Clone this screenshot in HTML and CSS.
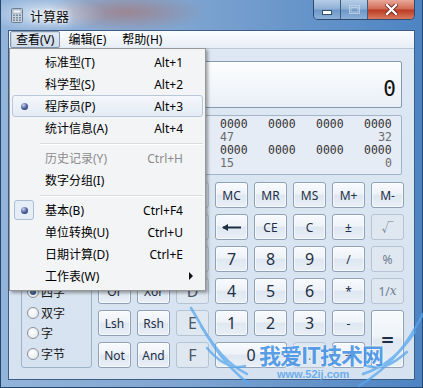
FILE: index.html
```html
<!DOCTYPE html>
<html lang="zh-CN">
<head>
	<meta charset="UTF-8">
	<title>计算器</title>
	<link rel="stylesheet" href="styles.css">
</head>
<body>

<div class="window">
	<div class="titlebar">
		<svg class="app-icon" width="12" height="15" viewBox="0 0 12 15">
			<rect x="0.5" y="0.5" width="11" height="14" rx="1" fill="#c9d3de" stroke="#6f7f92"/>
			<rect x="2" y="2" width="8" height="3" fill="#f4f8fc" stroke="#8796a8" stroke-width="0.6"/>
			<g fill="#7b8a9c">
				<rect x="2" y="6.5" width="2" height="1.5"/><rect x="5" y="6.5" width="2" height="1.5"/><rect x="8" y="6.5" width="2" height="1.5"/>
				<rect x="2" y="9" width="2" height="1.5"/><rect x="5" y="9" width="2" height="1.5"/><rect x="8" y="9" width="2" height="1.5"/>
				<rect x="2" y="11.5" width="2" height="1.5"/><rect x="5" y="11.5" width="2" height="1.5"/><rect x="8" y="11.5" width="2" height="1.5"/>
			</g>
		</svg>
		<span class="title">计算器</span>
		<div class="caption">
			<div class="cap-btn cap-min">
				<svg width="10" height="5" viewBox="0 0 10 5"><rect x="0.5" y="0.5" width="9" height="4" fill="#fff" stroke="#34506f"/></svg>
			</div>
			<div class="cap-btn cap-max">
				<svg width="11" height="9" viewBox="0 0 11 9"><rect x="0.5" y="0.5" width="10" height="8" fill="none" stroke="#c5d6ea"/><rect x="2" y="2.5" width="7" height="4.5" fill="none" stroke="#c5d6ea"/></svg>
			</div>
			<div class="cap-btn cap-close">
				<svg width="13" height="11" viewBox="0 0 13 11"><path d="M2 1 L11 10 M11 1 L2 10" stroke="#6b1a10" stroke-width="4" stroke-linecap="square"/><path d="M2 1 L11 10 M11 1 L2 10" stroke="#fff" stroke-width="2.4" stroke-linecap="square"/></svg>
			</div>
		</div>
	</div>

	<div class="client">
		<div class="menubar">
			<span class="menubar-item open">查看(V)</span>
			<span class="menubar-item">编辑(E)</span>
			<span class="menubar-item">帮助(H)</span>
		</div>

		<div class="calc">
			<div class="display"><span class="value">0</span></div>

			<div class="bits">
				<div class="bit-row"><span>0000</span><span>0000</span><span>0000</span><span>0000</span><span>0000</span><span>0000</span><span>0000</span><span>0000</span></div>
				<div class="bit-labels"><span class="lab-first">63</span><span class="lab-mid">47</span><span class="lab-last">32</span></div>
				<div class="bit-row"><span>0000</span><span>0000</span><span>0000</span><span>0000</span><span>0000</span><span>0000</span><span>0000</span><span>0000</span></div>
				<div class="bit-labels"><span class="lab-first">31</span><span class="lab-mid">15</span><span class="lab-last">0</span></div>
			</div>

			<div class="keypad">
				<div class="group group-radix">
					<label class="radio"><i></i>十六进制</label>
					<label class="radio checked"><i></i>十进制</label>
					<label class="radio"><i></i>八进制</label>
					<label class="radio"><i></i>二进制</label>
				</div>
				<div class="group group-word">
					<label class="radio checked"><i></i>四字</label>
					<label class="radio"><i></i>双字</label>
					<label class="radio"><i></i>字</label>
					<label class="radio"><i></i>字节</label>
				</div>

				<button class="key">Quot</button>
				<button class="key">Mod</button>
				<button class="key off hex">A</button>
				<button class="key">MC</button>
				<button class="key">MR</button>
				<button class="key">MS</button>
				<button class="key">M+</button>
				<button class="key">M-</button>

				<button class="key">(</button>
				<button class="key">)</button>
				<button class="key off hex">B</button>
				<button class="key">
					<svg width="20" height="7" viewBox="0 0 20 7"><path d="M1 3.5 H19" stroke="#1e2f45" stroke-width="2"/><path d="M0 3.5 L6 0 V7 Z" fill="#1e2f45"/></svg>
				</button>
				<button class="key">CE</button>
				<button class="key">C</button>
				<button class="key">±</button>
				<button class="key off">√</button>

				<button class="key">RoL</button>
				<button class="key">RoR</button>
				<button class="key off hex">C</button>
				<button class="key digit">7</button>
				<button class="key digit">8</button>
				<button class="key digit">9</button>
				<button class="key">/</button>
				<button class="key off">%</button>

				<button class="key">Or</button>
				<button class="key">Xor</button>
				<button class="key off hex">D</button>
				<button class="key digit">4</button>
				<button class="key digit">5</button>
				<button class="key digit">6</button>
				<button class="key">*</button>
				<button class="key off">1/<em>x</em></button>

				<button class="key">Lsh</button>
				<button class="key">Rsh</button>
				<button class="key off hex">E</button>
				<button class="key digit">1</button>
				<button class="key digit">2</button>
				<button class="key digit">3</button>
				<button class="key">-</button>
				<button class="key equals">=</button>

				<button class="key">Not</button>
				<button class="key">And</button>
				<button class="key off hex">F</button>
				<button class="key digit zero">0</button>
				<button class="key off">.</button>
				<button class="key">+</button>
			</div>
		</div>
	</div>

	<div class="menu">
		<div class="menu-item"><span class="mi-label">标准型(T)</span><span class="mi-key">Alt+1</span></div>
		<div class="menu-item"><span class="mi-label">科学型(S)</span><span class="mi-key">Alt+2</span></div>
		<div class="menu-item hover"><span class="mi-check"><b class="dot"></b></span><span class="mi-label">程序员(P)</span><span class="mi-key">Alt+3</span></div>
		<div class="menu-item"><span class="mi-label">统计信息(A)</span><span class="mi-key">Alt+4</span></div>
		<div class="menu-sep"></div>
		<div class="menu-item disabled"><span class="mi-label">历史记录(Y)</span><span class="mi-key">Ctrl+H</span></div>
		<div class="menu-item"><span class="mi-label">数字分组(I)</span></div>
		<div class="menu-sep"></div>
		<div class="menu-item"><span class="mi-check boxed"><b class="dot"></b></span><span class="mi-label">基本(B)</span><span class="mi-key">Ctrl+F4</span></div>
		<div class="menu-item"><span class="mi-label">单位转换(U)</span><span class="mi-key">Ctrl+U</span></div>
		<div class="menu-item"><span class="mi-label">日期计算(D)</span><span class="mi-key">Ctrl+E</span></div>
		<div class="menu-item"><span class="mi-label">工作表(W)</span><span class="mi-arrow"></span></div>
	</div>

	<div class="watermark">
		<svg class="wings" width="240" height="90" viewBox="0 0 240 90">
			<g fill="none" stroke="#56a6ee" stroke-width="2.5" stroke-linecap="round" opacity="0.75">
				<path d="M4 4 C20 30 30 55 62 80"/>
				<path d="M14 22 C28 44 40 60 60 70"/>
				<path d="M20 44 C32 58 44 66 58 62"/>
				<path d="M236 10 C222 36 208 60 172 82"/>
				<path d="M228 28 C214 48 200 62 176 70"/>
				<path d="M220 48 C206 60 196 66 180 62"/>
			</g>
		</svg>
		<span class="wm-title">我爱IT技术网</span>
		<span class="wm-url">www.52ij.com</span>
	</div>
</div>

</body>
</html>
```

FILE: styles.css
```css
* {
	box-sizing: border-box;
}

body {
	margin: 0;
	width: 423px;
	height: 388px;
	overflow: hidden;
	font-family: "Noto Sans", "Noto Sans CJK SC", sans-serif;
	font-size: 12px;
	color: #1e2f45;
}

.window {
	position: relative;
	width: 423px;
	height: 388px;
	display: flex;
	flex-direction: column;
	padding: 0 7px 7px 7px;
	border-left: 1px solid #23466e;
	border-right: 1px solid #23466e;
	border-bottom: 1px solid #23466e;
	background:
		radial-gradient(ellipse 80px 20px at 125px 12px, rgba(176, 104, 92, .55), rgba(176, 104, 92, 0)),
		radial-gradient(ellipse 60px 18px at 45px 14px, rgba(230, 238, 248, .85), rgba(230, 238, 248, 0)),
		linear-gradient(90deg, #93b4da 0, #7ea4d0 45%, #4d84c3 100%);
}

/* title bar */

.titlebar {
	height: 30px;
	display: flex;
	align-items: center;
	padding-left: 3px;
}

.app-icon {
	flex: none;
	margin-top: 1px;
}

.title {
	margin-left: 7px;
	font-size: 13px;
	color: #111;
	text-shadow: 0 0 6px #fff, 0 0 3px #fff;
}

.caption {
	align-self: flex-start;
	margin-left: auto;
	margin-right: 0;
	display: flex;
	height: 20px;
	border: 1px solid #2f4b6c;
	border-top: none;
	border-radius: 0 0 5px 5px;
	overflow: hidden;
}

.cap-btn {
	display: flex;
	align-items: center;
	justify-content: center;
	height: 100%;
}

.cap-min,
.cap-max {
	width: 27px;
	border-right: 1px solid #3d5c80;
	background: linear-gradient(#b7cde6, #8eafd5 48%, #6e96c6 52%, #8bb0da);
}

.cap-min svg {
	margin-top: 5px;
}

.cap-max svg {
	opacity: .8;
}

.cap-close {
	width: 46px;
	background: linear-gradient(#e9a898, #d06a55 48%, #bc3a22 52%, #d77a5f);
}

/* client area */

.client {
	flex: 1;
	display: flex;
	flex-direction: column;
	border: 1px solid #3b5d86;
	background: #d9e4f1;
}

.menubar {
	height: 18px;
	display: flex;
	align-items: stretch;
	padding-left: 1px;
	background: linear-gradient(#fbfcfe, #e8eef6);
	border-bottom: 1px solid #b9c7d7;
}

.menubar-item {
	display: flex;
	align-items: center;
	padding: 0 5px 0 5px;
	margin-right: 1px;
	line-height: 16px;
	border: 1px solid transparent;
	white-space: nowrap;
	color: #000;
}

.menubar-item + .menubar-item {
	margin-left: 1px;
}

.menubar-item:last-child {
	margin-left: 3px;
}

.menubar-item.open {
	border-color: #8396ad;
	border-radius: 2px;
	background: linear-gradient(#e3ebf5, #cfdceb);
	box-shadow: inset 1px 1px 0 rgba(0, 0, 0, .08);
}

.calc {
	flex: 1;
	padding: 12px 12px 0 12px;
	background: linear-gradient(#dde8f4, #d6e2ef);
}

.display {
	height: 47px;
	border: 1px solid #8599b2;
	border-radius: 2px;
	background: linear-gradient(#fdfeff, #e9eff7);
	display: flex;
	justify-content: flex-end;
	padding: 16px 5px 0 0;
}

.display .value {
	font-family: "DejaVu Sans Mono", monospace;
	font-size: 21px;
	line-height: 22px;
	color: #111;
}

.bits {
	margin-top: 7px;
	height: 60px;
	border: 1px solid #a3b4c8;
	border-radius: 2px;
	background: #e5ecf5;
	padding: 2px 0 0 6px;
	font-family: "DejaVu Sans Mono", monospace;
	font-size: 11.5px;
	line-height: 13px;
}

.bit-row,
.bit-labels {
	display: grid;
	grid-template-columns: repeat(8, 28px);
	column-gap: 20px;
	height: 13px;
}

.bit-row {
	color: #333;
}

.bit-labels {
	color: #6b6b6b;
}

.lab-first {
	grid-column: 1;
}

.lab-mid {
	grid-column: 5;
}

.lab-last {
	grid-column: 8;
	justify-self: end;
}

/* keys */

.keypad {
	margin-top: 7px;
	display: grid;
	grid-template-columns: 71px repeat(8, 33px);
	grid-template-rows: repeat(6, 26px);
	gap: 6px;
}

.group {
	grid-column: 1;
	border: 1px solid #9fb1c6;
	border-radius: 3px;
	display: flex;
	flex-direction: column;
	justify-content: space-around;
	padding: 2px 0 2px 5px;
}

.group-radix {
	grid-row: 1 / 4;
}

.group-word {
	grid-row: 4 / 7;
	justify-content: flex-start;
	padding-top: 3px;
}

.group-word .radio {
	height: 20.5px;
}

.radio {
	display: flex;
	align-items: center;
	gap: 2px;
	font-size: 12px;
	color: #1a1a1a;
	white-space: nowrap;
}

.radio i {
	width: 12px;
	height: 12px;
	border-radius: 50%;
	border: 1px solid #8a9099;
	background: radial-gradient(circle at 40% 35%, #fff, #dfe3e8);
	position: relative;
	flex: none;
}

.radio.checked i::after {
	content: "";
	position: absolute;
	left: 2px;
	top: 2px;
	width: 6px;
	height: 6px;
	border-radius: 50%;
	background: radial-gradient(circle at 40% 35%, #6d8fc0, #1b3566);
}

.key {
	margin: 0;
	padding: 0;
	border: 1px solid #8ea1b8;
	border-radius: 3px;
	background: linear-gradient(#f8fafd 0%, #eef3f8 45%, #dfe7f1 52%, #e9eff6 100%);
	box-shadow: inset 0 0 0 1px rgba(255, 255, 255, .6);
	font-family: "Noto Sans", "Noto Sans CJK SC", sans-serif;
	font-size: 12px;
	color: #1e2f45;
	display: flex;
	align-items: center;
	justify-content: center;
}

.key.digit {
	font-size: 16px;
}

.key.off {
	border-color: #b5c3d3;
	background: #dfe7f1;
	box-shadow: none;
	color: #6f7d8f;
}

.key.hex {
	font-size: 16px;
	color: #4a5666;
}

.key em {
	font-family: "DejaVu Serif", serif;
	font-size: 12px;
}

.key.equals {
	grid-column: 9;
	grid-row: 5 / 7;
	font-size: 22px;
	font-weight: 600;
}

.key.zero {
	grid-column: 5 / 7;
}

/* view menu */

.menu {
	position: absolute;
	left: 8px;
	top: 48px;
	width: 197px;
	height: 243px;
	padding: 2px;
	border: 1px solid #979797;
	background: #f3f4f6;
	box-shadow: 2px 2px 3px rgba(0, 0, 0, .35);
	color: #000;
	font-size: 12px;
}

.menu-item {
	position: relative;
	height: 22px;
	display: flex;
	align-items: center;
	padding: 0 19px 0 32px;
	border: 1px solid transparent;
	border-radius: 3px;
	white-space: nowrap;
}

.menu-item.hover {
	border-color: #b8c7d9;
	background: linear-gradient(#f4f7fb, #e4ebf4);
}

.menu-item.disabled {
	color: #8c8c8c;
}

.mi-label {
	flex: 1;
}

.mi-check {
	position: absolute;
	left: 1px;
	top: 0;
	width: 20px;
	height: 20px;
	display: flex;
	align-items: center;
	justify-content: center;
}

.mi-check.boxed {
	border: 1px solid #a9bdd6;
	border-radius: 3px;
	background: #e5edf7;
}

.dot {
	width: 7px;
	height: 7px;
	border-radius: 50%;
	background: radial-gradient(circle at 35% 30%, #c8cfee, #4a5a9a 55%, #1d2656);
}

.mi-arrow {
	width: 0;
	height: 0;
	margin-right: -10px;
	border-left: 4px solid #111;
	border-top: 4px solid transparent;
	border-bottom: 4px solid transparent;
}

.menu-sep {
	height: 8px;
	margin-left: 28px;
	display: flex;
	flex-direction: column;
	justify-content: center;
}

.menu-sep::before {
	content: "";
	height: 1px;
	background: #dcdcdc;
	box-shadow: 0 1px 0 #fff;
}

/* watermark */

.watermark {
	position: absolute;
	left: 190px;
	top: 300px;
	width: 233px;
	height: 88px;
	pointer-events: none;
}

.wings {
	position: absolute;
	left: -4px;
	top: 4px;
}

.wm-title {
	position: absolute;
	left: 68px;
	top: 40px;
	font-family: "Noto Sans CJK SC", sans-serif;
	font-size: 22px;
	font-weight: 700;
	line-height: 28px;
	letter-spacing: -1px;
	color: #3f8fe4;
	opacity: .85;
	text-shadow: 0 0 2px #fff, 0 0 2px #fff;
}

.wm-url {
	position: absolute;
	left: 86px;
	top: 68px;
	font-family: "Liberation Sans", sans-serif;
	font-size: 11px;
	font-weight: 700;
	color: #5aa5ea;
	opacity: .85;
}
```
